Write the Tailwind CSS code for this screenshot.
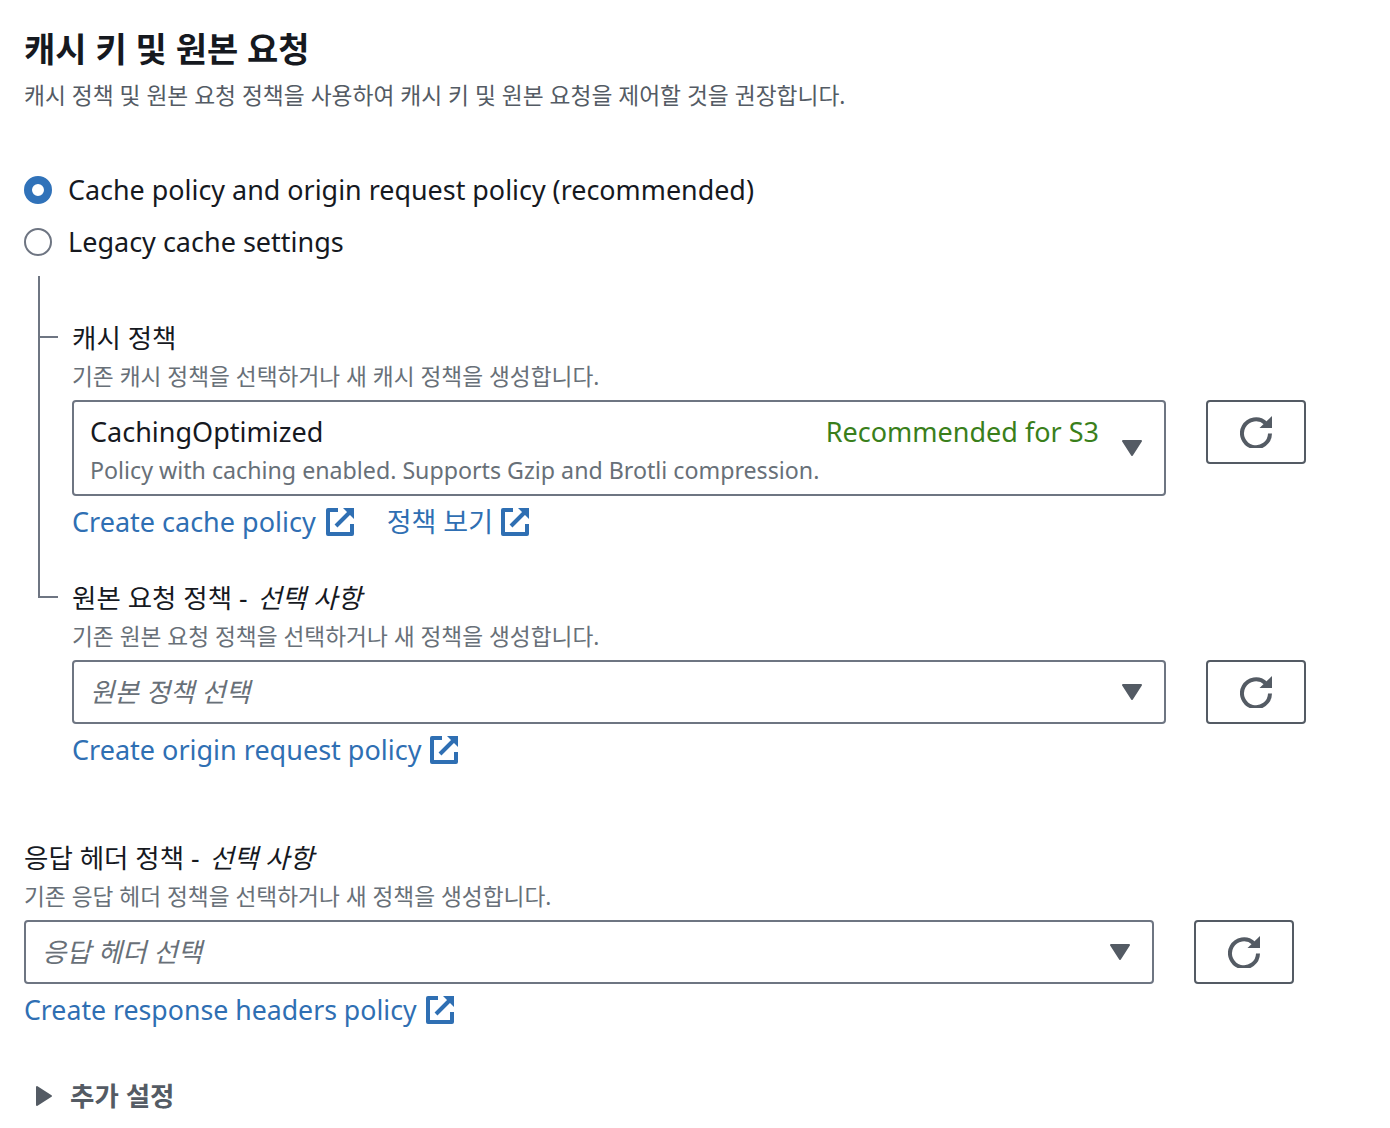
<!DOCTYPE html>
<html lang="ko">
<head>
    <meta charset="UTF-8">
    <title>캐시 키 및 원본 요청</title>
    <script src="https://cdn.jsdelivr.net/npm/@tailwindcss/browser@4"></script>
</head>
<body class="bg-white h-[1128px] overflow-hidden font-['Noto_Sans','Noto_Sans_CJK_KR',sans-serif] text-[#16191f]">
    <div class="pl-6 pt-[28px]">
        <h1 class="text-[34px] leading-[42px] font-bold">캐시 키 및 원본 요청</h1>
        <p class="mt-[8px] h-[36px] text-[22.75px] leading-[36px] text-[#545b64]">캐시 정책 및 원본 요청 정책을 사용하여 캐시 키 및 원본 요청을 제어할 것을 권장합니다.</p>

        <!-- Radio options -->
        <div class="mt-[56px] flex flex-col gap-[12px]">
            <label class="flex items-center gap-4 h-[40px]">
                <span class="w-7 h-7 rounded-full border-[8px] border-[#3072b9] bg-white"></span>
                <span class="text-[26.9px] leading-[40px]">Cache policy and origin request policy (recommended)</span>
            </label>
            <label class="flex items-center gap-4 h-[40px]">
                <span class="w-7 h-7 rounded-full border-2 border-[#6e7582] bg-white"></span>
                <span class="text-[27px] leading-[40px]">Legacy cache settings</span>
            </label>
        </div>

        <!-- Nested policies -->
        <div class="relative mt-[14px] pl-[48px] h-[540px]">
            <div class="absolute left-[14px] top-0 w-[2px] h-[322px] bg-[#6e7582]"></div>
            <div class="absolute left-[14px] top-[60px] w-[20px] h-[2px] bg-[#6e7582]"></div>
            <div class="absolute left-[14px] top-[320px] w-[20px] h-[2px] bg-[#6e7582]"></div>

            <div class="pt-[42px]">
                <div class="text-[26.5px] leading-[40px]">캐시 정책</div>
                <div class="pt-[1px] text-[22.7px] leading-[36px] text-[#687078]">기존 캐시 정책을 선택하거나 새 캐시 정책을 생성합니다.</div>
                <div class="flex gap-[40px] mt-[5px]">
                    <div class="w-[1094px] h-[96px] border-2 border-[#6e7582] rounded-[4px] pl-[16px] relative">
                        <div class="flex justify-between pr-[65px] pt-[10px]">
                            <span class="text-[27px] leading-[40px]">CachingOptimized</span>
                            <span class="text-[27px] leading-[40px] text-[#3a7f1b]">Recommended for S3</span>
                        </div>
                        <div class="text-[23.2px] leading-[36px] text-[#687078]">Policy with caching enabled. Supports Gzip and Brotli compression.</div>
                        <svg class="absolute right-[22px] top-[38px] w-[20px] h-[16px]" viewBox="0 0 20 16"><path d="M1 1h18L10 15z" fill="#545b64" stroke="#545b64" stroke-width="2" stroke-linejoin="round"/></svg>
                    </div>
                    <button class="w-[100px] h-[64px] border-2 border-[#545b64] rounded-[4px] flex items-center justify-center">
                        <svg class="w-8 h-8" viewBox="0 0 32 32"><path d="M25.500 7A14 14 0 1 0 30 17.500" fill="none" stroke="#545b64" stroke-width="4"/><path d="M32 0v12H19.500z" fill="#545b64"/></svg>
                    </button>
                </div>
                <div class="flex items-center h-[40px] mt-[6px] text-[27px] leading-[40px] text-[#2f6fb3]">
                    <span>Create cache policy</span>
                    <svg class="ml-[10px] w-[28px] h-[28px]" viewBox="0 0 28 28"><path d="M12 2H2v24h24V16" fill="none" stroke="#2f6fb3" stroke-width="4" stroke-linejoin="round"/><path d="M10 18 24 4" fill="none" stroke="#2f6fb3" stroke-width="4"/><path d="M17 0h11v11z" fill="#2f6fb3"/></svg>
                    <span class="ml-[33px]">정책 보기</span>
                    <svg class="ml-[8px] w-[28px] h-[28px]" viewBox="0 0 28 28"><path d="M12 2H2v24h24V16" fill="none" stroke="#2f6fb3" stroke-width="4" stroke-linejoin="round"/><path d="M10 18 24 4" fill="none" stroke="#2f6fb3" stroke-width="4"/><path d="M17 0h11v11z" fill="#2f6fb3"/></svg>
                </div>
            </div>

            <div class="mt-[36px]">
                <div class="text-[26.5px] leading-[40px]">원본 요청 정책 - <i class="ml-[3px]">선택 사항</i></div>
                <div class="pt-[1px] text-[22.7px] leading-[36px] text-[#687078]">기존 원본 요청 정책을 선택하거나 새 정책을 생성합니다.</div>
                <div class="flex gap-[40px] mt-[5px]">
                    <div class="w-[1094px] h-[64px] border-2 border-[#6e7582] rounded-[4px] pl-[16px] pr-[22px] flex items-center justify-between">
                        <i class="text-[26.5px] leading-[40px] text-[#687078]">원본 정책 선택</i>
                        <svg class="w-[20px] h-[16px]" viewBox="0 0 20 16"><path d="M1 1h18L10 15z" fill="#545b64" stroke="#545b64" stroke-width="2" stroke-linejoin="round"/></svg>
                    </div>
                    <button class="w-[100px] h-[64px] border-2 border-[#545b64] rounded-[4px] flex items-center justify-center">
                        <svg class="w-8 h-8" viewBox="0 0 32 32"><path d="M25.500 7A14 14 0 1 0 30 17.500" fill="none" stroke="#545b64" stroke-width="4"/><path d="M32 0v12H19.500z" fill="#545b64"/></svg>
                    </button>
                </div>
                <div class="flex items-center h-[40px] mt-[6px] text-[27px] leading-[40px] text-[#2f6fb3]">
                    <span>Create origin request policy</span>
                    <svg class="ml-[9px] w-[28px] h-[28px]" viewBox="0 0 28 28"><path d="M12 2H2v24h24V16" fill="none" stroke="#2f6fb3" stroke-width="4" stroke-linejoin="round"/><path d="M10 18 24 4" fill="none" stroke="#2f6fb3" stroke-width="4"/><path d="M17 0h11v11z" fill="#2f6fb3"/></svg>
                </div>
            </div>
        </div>

        <!-- Response headers -->
        <div class="mt-[22px]">
            <div class="text-[26.5px] leading-[40px]">응답 헤더 정책 - <i class="ml-[3px]">선택 사항</i></div>
            <div class="pt-[1px] text-[22.7px] leading-[36px] text-[#687078]">기존 응답 헤더 정책을 선택하거나 새 정책을 생성합니다.</div>
            <div class="flex gap-[40px] mt-[5px]">
                <div class="w-[1130px] h-[64px] border-2 border-[#6e7582] rounded-[4px] pl-[16px] pr-[22px] flex items-center justify-between">
                    <i class="text-[26.5px] leading-[40px] text-[#687078]">응답 헤더 선택</i>
                    <svg class="w-[20px] h-[16px]" viewBox="0 0 20 16"><path d="M1 1h18L10 15z" fill="#545b64" stroke="#545b64" stroke-width="2" stroke-linejoin="round"/></svg>
                </div>
                <button class="w-[100px] h-[64px] border-2 border-[#545b64] rounded-[4px] flex items-center justify-center">
                    <svg class="w-8 h-8" viewBox="0 0 32 32"><path d="M25.500 7A14 14 0 1 0 30 17.500" fill="none" stroke="#545b64" stroke-width="4"/><path d="M32 0v12H19.500z" fill="#545b64"/></svg>
                </button>
            </div>
            <div class="flex items-center h-[40px] mt-[6px] text-[26.7px] leading-[40px] text-[#2f6fb3]">
                <span>Create response headers policy</span>
                <svg class="ml-[9px] w-[28px] h-[28px]" viewBox="0 0 28 28"><path d="M12 2H2v24h24V16" fill="none" stroke="#2f6fb3" stroke-width="4" stroke-linejoin="round"/><path d="M10 18 24 4" fill="none" stroke="#2f6fb3" stroke-width="4"/><path d="M17 0h11v11z" fill="#2f6fb3"/></svg>
            </div>
        </div>

        <!-- Additional settings -->
        <div class="flex items-center mt-[46px] h-[40px] pl-[11px] text-[#545b64]">
            <svg class="w-[18px] h-[22px]" viewBox="0 0 18 22"><path d="M2 2v18l14-9z" fill="#545b64" stroke="#545b64" stroke-width="2" stroke-linejoin="round"/></svg>
            <span class="ml-[17px] text-[26.5px] leading-[40px] font-bold">추가 설정</span>
        </div>
    </div>
</body>
</html>
